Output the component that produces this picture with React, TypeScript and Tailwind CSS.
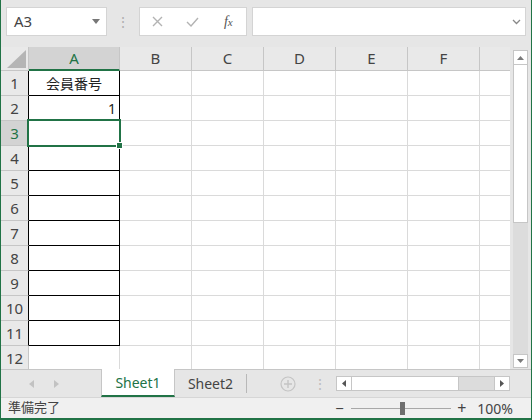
import React from "react";

const columns = [
  { key: "A", width: 91 },
  { key: "B", width: 72 },
  { key: "C", width: 72 },
  { key: "D", width: 72 },
  { key: "E", width: 72 },
  { key: "F", width: 72 },
  { key: "", width: 31 },
];

const rows = Array.from({ length: 12 }, (_, i) => i + 1);

function CornerCell() {
  return (
    <div className="flex h-[24px] w-[28px] shrink-0 items-end justify-end border-r border-b border-[#c6c6c6] bg-[#e9e9e9] pr-[2px] pb-[2px]">
      <svg width="19" height="18" viewBox="0 0 19 18">
        <polygon points="19,0 19,18 0,18" fill="#b5b5b5" />
      </svg>
    </div>
  );
}

function ColumnHeader({ label, width }: { label: string; width: number }) {
  const isActive = label === "A";
  return (
    <div
      style={{ width }}
      className={`flex h-[24px] shrink-0 items-center justify-center border-r border-[#c6c6c6] text-[15px] ${
        isActive
          ? "border-b-2 border-b-[#217346] bg-[#d3d3d3] text-[#217346]"
          : "border-b border-b-[#c6c6c6] bg-[#e9e9e9] text-[#444]"
      }`}
    >
      {label}
    </div>
  );
}

function GridRow({ row }: { row: number }) {
  const isActive = row === 3;
  const hasBox = row <= 11;
  return (
    <div className="flex h-[25px] shrink-0">
      <div
        className={`flex w-[28px] shrink-0 items-center justify-center border-b border-b-[#c6c6c6] border-r text-[15px] ${
          hasBox ? "border-r-black" : "border-r-[#c6c6c6]"
        } ${isActive ? "bg-[#d3d3d3] text-[#217346]" : "bg-[#e9e9e9] text-[#444]"}`}
      >
        {row}
      </div>
      {columns.map((col) => {
        const isA = col.key === "A";
        const boxed = isA && hasBox;
        return (
          <div
            key={col.key || "g"}
            style={{ width: col.width }}
            className={`relative flex shrink-0 items-center border-r border-b px-[3px] text-[14px] text-[#222] ${
              boxed ? "border-black" : "border-[#dadada]"
            } ${row === 1 ? "justify-center" : "justify-end"}`}
          >
            {isA && row === 1 && <span className="pt-[1px]">会員番号</span>}
            {isA && row === 2 && <span>1</span>}
            {isA && isActive && (
              <>
                <div className="pointer-events-none absolute -top-[2px] -left-[2px] -right-[2px] -bottom-[2px] z-10 border-2 border-[#217346]" />
                <div className="absolute -right-[4px] -bottom-[4px] z-20 h-[7px] w-[7px] border border-white bg-[#217346]" />
              </>
            )}
          </div>
        );
      })}
    </div>
  );
}

function VerticalScrollbar() {
  return (
    <div className="flex h-full w-[15px] flex-col pt-[3px] pb-[1px]">
      <div className="flex h-[15px] shrink-0 items-center justify-center border border-[#c6c6c6] bg-white">
        <svg width="7" height="4" viewBox="0 0 7 4">
          <polygon points="0,4 7,4 3.5,0" fill="#7a7a7a" />
        </svg>
      </div>
      <div className="h-[158px] shrink-0 border-x border-b border-[#c6c6c6] bg-white" />
      <div className="flex-1 bg-[#dcdcdc]" />
      <div className="flex h-[14px] shrink-0 items-center justify-center border border-[#c6c6c6] bg-white">
        <svg width="7" height="4" viewBox="0 0 7 4">
          <polygon points="0,0 7,0 3.5,4" fill="#7a7a7a" />
        </svg>
      </div>
    </div>
  );
}

export default function App() {
  return (
    <div
      className="flex h-[420px] w-[532px] flex-col overflow-hidden border-x border-b-2 border-[#217346] bg-[#e6e6e6] text-[#444]"
      style={{ fontFamily: '"Noto Sans", "Noto Sans CJK JP", sans-serif' }}
    >
      {/* formula bar */}
      <div className="flex h-[47px] shrink-0 items-start pt-[7px]">
        <div className="ml-[5px] flex h-[29px] w-[101px] items-center justify-between border border-[#d4d4d4] bg-white pl-[7px] pr-[6px] text-[15px] text-[#444]">
          <span>A3</span>
          <svg width="8" height="5" viewBox="0 0 8 5">
            <polygon points="0,0 8,0 4,5" fill="#777" />
          </svg>
        </div>
        <div className="flex h-[29px] w-[32px] items-center justify-center text-[14px] leading-none text-[#b0b0b0]">
          ⋮
        </div>
        <div className="flex h-[29px] w-[108px] items-center border border-[#d4d4d4] bg-white">
          <div className="flex w-[36px] justify-center">
            <svg width="11" height="11" viewBox="0 0 11 11">
              <path d="M1 1 L10 10 M10 1 L1 10" stroke="#b3b3b3" strokeWidth="1.4" />
            </svg>
          </div>
          <div className="flex w-[36px] justify-center">
            <svg width="13" height="10" viewBox="0 0 13 10">
              <path d="M1 5 L5 9 L12 1" stroke="#b3b3b3" strokeWidth="1.4" fill="none" />
            </svg>
          </div>
          <div
            className="flex w-[36px] justify-center text-[14px] italic text-[#555]"
            style={{ fontFamily: '"Liberation Serif", serif' }}
          >
            f<span className="pt-[3px] text-[11px]">x</span>
          </div>
        </div>
        <div className="ml-[5px] flex h-[29px] w-[274px] items-center justify-end border border-[#d4d4d4] bg-white pr-[4px]">
          <svg width="9" height="6" viewBox="0 0 9 6">
            <path d="M1 1 L4.5 4.5 L8 1" stroke="#888" strokeWidth="1.3" fill="none" />
          </svg>
        </div>
      </div>

      {/* grid */}
      <div className="flex h-[322px] shrink-0">
        <div className="flex w-[509px] flex-col overflow-hidden bg-white">
          <div className="flex shrink-0">
            <CornerCell />
            {columns.map((col) => (
              <ColumnHeader key={col.key || "g"} label={col.key} width={col.width} />
            ))}
          </div>
          {rows.map((row) => (
            <GridRow key={row} row={row} />
          ))}
        </div>
        <div className="ml-[3px] h-full">
          <VerticalScrollbar />
        </div>
      </div>

      {/* sheet tabs */}
      <div className="flex h-[28px] shrink-0 items-stretch border-t border-[#c6c6c6] bg-[#e6e6e6]">
        <div className="flex w-[100px] items-center gap-[20px] pl-[28px]">
          <svg width="5" height="8" viewBox="0 0 5 8">
            <polygon points="5,0 5,8 0,4" fill="#c2c2c2" />
          </svg>
          <svg width="5" height="8" viewBox="0 0 5 8">
            <polygon points="0,0 0,8 5,4" fill="#c2c2c2" />
          </svg>
        </div>
        <div className="-mt-[1px] flex w-[74px] items-center justify-center border-x border-[#c6c6c6] border-b-2 border-b-[#217346] bg-white text-[14px] text-[#217346]">
          Sheet1
        </div>
        <div className="flex w-[71px] items-center justify-center text-[14px] text-[#444]">
          Sheet2
        </div>
        <div className="my-[4px] w-px bg-[#b8b8b8]" />
        <div className="ml-[33px] flex items-center">
          <svg width="16" height="16" viewBox="0 0 16 16">
            <circle cx="8" cy="8" r="7" fill="none" stroke="#c4c4c4" strokeWidth="1.2" />
            <path d="M8 4 V12 M4 8 H12" stroke="#c4c4c4" strokeWidth="1.4" />
          </svg>
        </div>
        <div className="ml-[21px] flex w-[6px] items-center justify-center text-[14px] leading-none text-[#bdbdbd]">
          ⋮
        </div>
        <div className="ml-[13px] flex items-center">
          <div className="flex h-[15px] w-[174px] border border-[#c6c6c6] bg-[#dcdcdc]">
            <div className="flex w-[15px] items-center justify-center border-r border-[#c6c6c6] bg-white">
              <svg width="4" height="7" viewBox="0 0 4 7">
                <polygon points="4,0 4,7 0,3.5" fill="#555" />
              </svg>
            </div>
            <div className="w-[107px] border-r border-[#c6c6c6] bg-white" />
            <div className="flex-1" />
            <div className="flex w-[15px] items-center justify-center border-l border-[#c6c6c6] bg-white">
              <svg width="4" height="7" viewBox="0 0 4 7">
                <polygon points="0,0 0,7 4,3.5" fill="#555" />
              </svg>
            </div>
          </div>
        </div>
      </div>

      {/* status bar */}
      <div className="flex h-[21px] shrink-0 items-center border-t border-[#d6d6d6] bg-[#f0f0f0] pl-[7px] text-[13px] text-[#444]">
        <span>準備完了</span>
        <div className="ml-auto flex items-center pr-[18px]">
          <span className="w-[12px] text-[15px] leading-none">−</span>
          <div className="relative ml-[4px] h-px w-[100px] bg-[#a8a8a8]">
            <div className="absolute top-[-6px] left-[49px] h-[13px] w-[5px] bg-[#6e6e6e]" />
          </div>
          <span className="ml-[6px] w-[14px] text-[16px] leading-none">+</span>
          <span className="ml-[6px] text-[14px]">100%</span>
        </div>
      </div>
    </div>
  );
}
